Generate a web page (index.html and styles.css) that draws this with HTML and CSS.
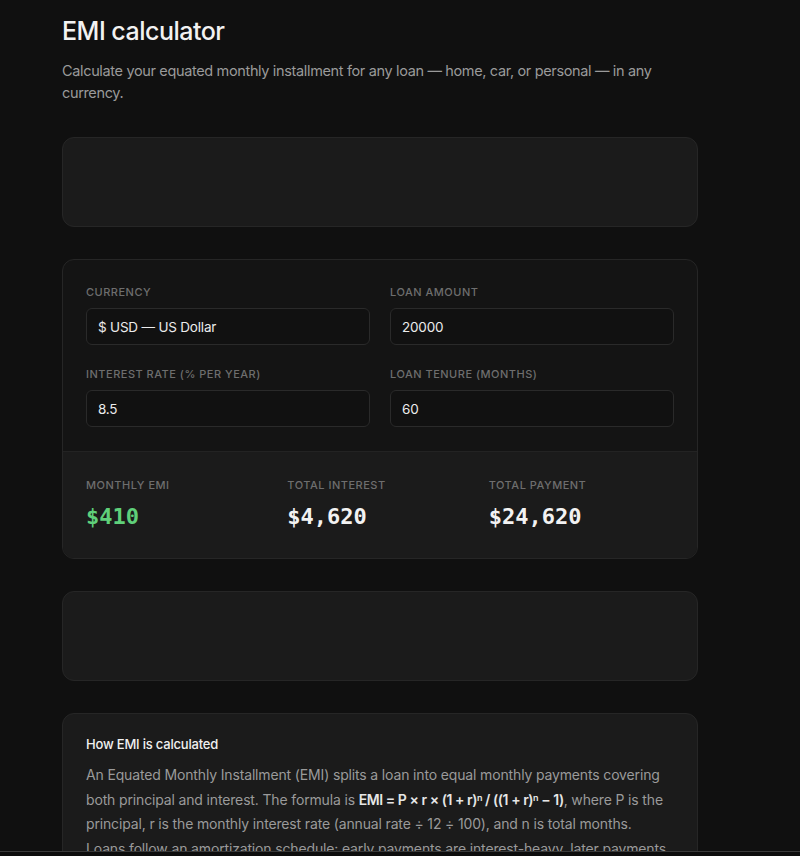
FILE: index.html
```html
<!DOCTYPE html>
<html lang="en">
<head>
<meta charset="utf-8">
<title>EMI calculator</title>
<link rel="stylesheet" href="styles.css">
</head>
<body>
<main class="page">
  <header class="intro">
    <h1 class="title">EMI calculator</h1>
    <p class="lead">Calculate your equated monthly installment for any loan — home, car, or personal — in any currency.</p>
  </header>

  <div class="card placeholder"></div>

  <section class="card calc">
    <div class="form">
      <div class="field">
        <span class="label">Currency</span>
        <div class="input">$ USD — US Dollar</div>
      </div>
      <div class="field">
        <span class="label">Loan amount</span>
        <div class="input">20000</div>
      </div>
      <div class="field">
        <span class="label">Interest rate (% per year)</span>
        <div class="input">8.5</div>
      </div>
      <div class="field">
        <span class="label">Loan tenure (months)</span>
        <div class="input">60</div>
      </div>
    </div>
    <div class="results">
      <div class="stat">
        <span class="label">Monthly EMI</span>
        <span class="value accent">$410</span>
      </div>
      <div class="stat">
        <span class="label">Total interest</span>
        <span class="value">$4,620</span>
      </div>
      <div class="stat">
        <span class="label">Total payment</span>
        <span class="value">$24,620</span>
      </div>
    </div>
  </section>

  <div class="card placeholder"></div>

  <section class="card explain">
    <h2 class="explain-title">How EMI is calculated</h2>
    <p class="explain-text">An Equated Monthly Installment (EMI) splits a loan into equal monthly payments covering both principal and interest. The formula is <strong>EMI = P × r × (1 + r)<span class="sup">n</span> / ((1 + r)<span class="sup">n</span> − 1)</strong>, where P is the principal, r is the monthly interest rate (annual rate ÷ 12 ÷ 100), and n is total months.<br>Loans follow an amortization schedule: early payments are interest-heavy, later payments are principal-heavy.</p>
  </section>
</main>
<div class="bottom-bar"></div>
</body>
</html>
```

FILE: styles.css
```css
html, body {
  margin: 0;
  padding: 0;
  background: #101010;
}
body {
  font-family: Inter, "Noto Sans", sans-serif;
  color: #ededed;
}
.page {
  max-width: 636px;
  padding: 14px 62px 40px;
  display: flex;
  flex-direction: column;
  gap: 32px;
}
.title {
  margin: 0;
  font-size: 25px;
  font-weight: 500;
  line-height: 34px;
  letter-spacing: -0.5px;
  color: #f2f2f2;
}
.lead {
  margin: 12px 0 0;
  font-size: 14.5px;
  line-height: 22px;
  letter-spacing: -0.35px;
  color: #9a9a9a;
}
.card {
  background: #1b1b1b;
  border: 1px solid #262626;
  border-radius: 12px;
  box-sizing: border-box;
}
.placeholder {
  height: 90px;
}
.intro + .placeholder {
  margin-top: 1px;
}
.calc {
  background: #141414;
  overflow: hidden;
}
.form {
  display: grid;
  grid-template-columns: 1fr 1fr;
  column-gap: 20px;
  row-gap: 22px;
  padding: 25px 23px 24px;
}
.field {
  display: flex;
  flex-direction: column;
  gap: 9px;
}
.label {
  font-size: 11px;
  line-height: 14px;
  letter-spacing: 0.5px;
  text-transform: uppercase;
  color: #6e6e6e;
  font-weight: 500;
}
.input {
  height: 37px;
  box-sizing: border-box;
  border: 1px solid #2a2a2a;
  border-radius: 6px;
  background: #111111;
  padding: 0 11px;
  display: flex;
  align-items: center;
  font-size: 13.5px;
  letter-spacing: -0.2px;
  color: #ececec;
}
.results {
  background: #1b1b1b;
  border-top: 1px solid #232323;
  display: grid;
  grid-template-columns: repeat(3, 1fr);
  column-gap: 16px;
  padding: 26px 23px 27px;
}
.stat {
  display: flex;
  flex-direction: column;
  gap: 11px;
}
.value {
  font-family: "DejaVu Sans Mono", "Liberation Mono", monospace;
  font-weight: 700;
  font-size: 22px;
  line-height: 28px;
  color: #f2f2f2;
}
.value.accent {
  color: #5fd07a;
}
.explain {
  padding: 21px 23px 24px;
}
.explain-title {
  margin: 0;
  font-size: 13px;
  font-weight: 500;
  line-height: 18px;
  letter-spacing: -0.2px;
  color: #f0f0f0;
}
.explain-text {
  margin: 10px 0 0;
  font-size: 14px;
  line-height: 24.5px;
  letter-spacing: -0.15px;
  color: #9a9a9a;
}
.explain-text strong {
  color: #e6e6e6;
  font-weight: 600;
  letter-spacing: -0.45px;
}
.sup {
  font-size: 9px;
  vertical-align: 4px;
  line-height: 1;
}
.bottom-bar {
  position: fixed;
  left: 0;
  right: 0;
  bottom: 0;
  height: 4px;
  background: #0d0d0d;
  border-top: 1px solid #3a3a3a;
}
```
